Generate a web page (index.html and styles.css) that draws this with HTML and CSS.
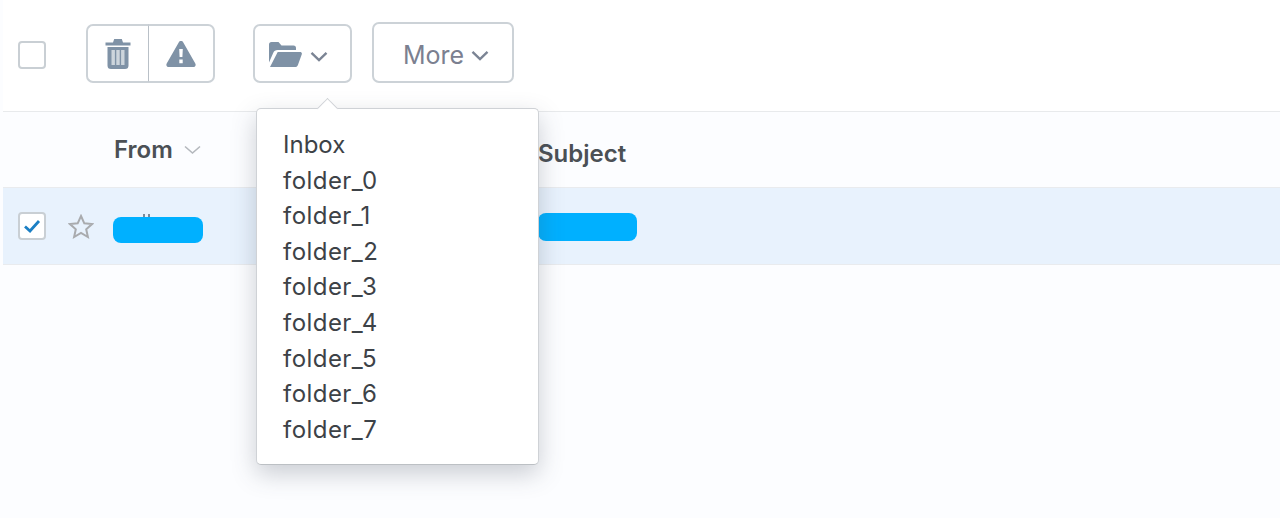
FILE: index.html
```html
<!DOCTYPE html>
<html lang="en">
<head>
  <meta charset="UTF-8" />
  <title>Inbox</title>
  <link rel="stylesheet" href="styles.css">
</head>
<body>
  <div class="toolbar">
    <span class="checkbox"></span>
    <div class="btn-group">
      <button class="btn btn-trash" aria-label="Delete">
        <svg width="26" height="31" viewBox="0 0 26 31"><path fill="#7f92a6" d="M.500 4.500h25v3H.500zM8 4.500l1.200-3.500h7.600L18 4.500zM2.500 9h21v18.500a3.500 3.500 0 0 1-3.500 3.500H6a3.500 3.500 0 0 1-3.500-3.500z"/><path fill="#cdd5dc" d="M6.500 12h3.400v15H6.500zM11.300 12h3.400v15h-3.400zM16.100 12h3.400v15h-3.400z"/></svg>
      </button>
      <button class="btn btn-warn" aria-label="Report">
        <svg width="30" height="26" viewBox="0 0 30 26"><path fill="#7f92a6" fill-rule="evenodd" d="M15 0c1 0 1.800.5 2.300 1.400l12 21c1 1.700-.2 3.600-2.200 3.600H2.900c-2 0-3.200-1.900-2.200-3.600l12-21C13.200.5 14 0 15 0zM13.200 8l.4 8h2.800l.4-8zM13.300 18.500v3.700h3.400v-3.700z"/></svg>
      </button>
    </div>
    <button class="btn btn-folder" aria-label="Move to folder">
      <svg width="33" height="25" viewBox="0 0 33 25"><path fill="#7f92a6" d="M0 2.500A2.500 2.500 0 0 1 2.500 0h7l3 3.500h12A2.500 2.500 0 0 1 27 6v2H8.500c-2 0-3.400 1-4.200 2.800L0 20.500z"/><path fill="#7f92a6" d="M8.700 10H31c1.400 0 2.200 1 1.800 2.300l-3.800 10.400c-.5 1.400-1.500 2.300-3 2.300H1z"/></svg>
      <svg class="chev" width="18" height="11" viewBox="0 0 18 11"><path fill="none" stroke="#7b8494" stroke-width="2.400" d="M1.500 1.800 9 9l7.500-7.200"/></svg>
    </button>
    <button class="btn btn-more">More
      <svg class="chev" width="18" height="11" viewBox="0 0 18 11"><path fill="none" stroke="#7b8494" stroke-width="2.400" d="M1.500 1.800 9 9l7.500-7.200"/></svg>
    </button>
  </div>

  <div class="mail-list">
    <div class="list-row list-head">
      <div class="col-from">From
        <svg width="17" height="10" viewBox="0 0 17 10"><path fill="none" stroke="#b4b8bd" stroke-width="1.600" d="M1 1.500 8.500 8 16 1.500"/></svg>
      </div>
      <div class="col-subject">Subject</div>
    </div>
    <div class="list-row list-selected">
      <span class="checkbox checked">
        <svg width="20" height="16" viewBox="0 0 20 16"><path fill="none" stroke="#1b7fc4" stroke-width="2.800" d="M3 8.500 8 13 17 3"/></svg>
      </span>
      <svg class="star" width="26" height="25" viewBox="0 0 26 25"><path fill="none" stroke="#a9abae" stroke-width="2" d="M13 2l3.300 7.300 7.700.8-5.800 5.200 1.700 7.700-6.900-4-6.900 4 1.700-7.700L2 10.100l7.700-.8z"/></svg>
      <div class="col-from"><span class="redact redact-from"></span></div>
      <div class="col-subject"><span class="redact redact-subject"></span></div>
    </div>
  </div>

  <div class="folder-menu">
    <ul>
      <li>Inbox</li>
      <li>folder_0</li>
      <li>folder_1</li>
      <li>folder_2</li>
      <li>folder_3</li>
      <li>folder_4</li>
      <li>folder_5</li>
      <li>folder_6</li>
      <li>folder_7</li>
    </ul>
  </div>
</body>
</html>
```

FILE: styles.css
```css
html, body {
  height: 100%;
}
body {
  margin: 0;
  overflow: hidden;
  background: #fcfdff;
  font-family: Inter, "Liberation Sans", sans-serif;
  color: #3d4247;
}
.toolbar {
  display: flex;
  align-items: flex-end;
  height: 83px;
  padding: 0 0 28px 15px;
  margin-left: 3px;
  background: #fff;
  border-bottom: 1px solid #e8eaec;
}
.checkbox {
  display: flex;
  align-items: center;
  justify-content: center;
  flex: none;
  width: 28px;
  height: 28px;
  box-sizing: border-box;
  background: #fff;
  border: 2px solid #c9cfd4;
  border-radius: 4px;
}
.toolbar > .checkbox {
  margin-bottom: 14px;
}
.btn {
  display: flex;
  align-items: center;
  justify-content: center;
  box-sizing: border-box;
  height: 59px;
  padding: 0;
  background: #fff;
  border: 2px solid #ccd2d7;
  border-radius: 7px;
  font: inherit;
  color: #7b8090;
}
.btn-group {
  display: flex;
  margin-left: 40px;
}
.btn-trash {
  width: 62px;
  border-right: 0;
  border-radius: 7px 0 0 7px;
}
.btn-warn {
  width: 67px;
  border-left: 1px solid #b9c0c7;
  border-radius: 0 7px 7px 0;
}
.btn-folder {
  width: 99px;
  margin-left: 38px;
  padding: 2px 9px 0 0;
  gap: 8px;
}
.btn-folder .chev {
  margin-top: 4px;
}
.btn-more {
  width: 142px;
  height: 61px;
  margin-left: 20px;
  padding: 4px 0 0 6px;
  gap: 7px;
  font-size: 25px;
}
.btn-more .chev {
  margin-top: 2px;
}
.list-row {
  display: flex;
  align-items: center;
  margin-left: 3px;
  padding-left: 15px;
  border-bottom: 1px solid #e9ebee;
}
.list-head {
  height: 75px;
  font-size: 24px;
  font-weight: 600;
  color: #4b5055;
}
.list-head .col-from {
  display: flex;
  align-items: center;
  gap: 11px;
  margin-left: 96px;
  width: 424px;
}
.list-head .col-subject {
  padding-top: 8px;
}
.list-selected {
  height: 76px;
  background: #e8f2fd;
}
.star {
  margin-left: 22px;
}
.list-selected .col-from {
  margin-left: 19px;
  width: 425px;
}
.redact {
  display: block;
  position: relative;
  background: #00b0ff;
  border-radius: 8px;
}
.redact-from {
  width: 90px;
  height: 26px;
  margin-top: 8px;
}
/* tiny bit of the name still showing above the blur */
.redact-from::before {
  content: "";
  position: absolute;
  left: 30px;
  top: -3px;
  width: 2px;
  height: 3px;
  background: #7d8a99;
  box-shadow: 5px 0 #7d8a99;
}
.redact-subject {
  width: 99px;
  height: 28px;
  margin-top: 2px;
}
.folder-menu {
  position: absolute;
  left: 256px;
  top: 108px;
  width: 283px;
  height: 357px;
  box-sizing: border-box;
  padding: 18px 26px;
  background: #fff;
  border: 1px solid #cfd2d6;
  border-bottom-color: #bcc0c4;
  border-radius: 5px;
  box-shadow: 0 9px 24px rgba(60, 70, 85, 0.26);
  font-size: 24px;
  letter-spacing: 0.45px;
  color: #3d4247;
}
.folder-menu::before {
  content: "";
  position: absolute;
  left: 63px;
  top: -8px;
  width: 14px;
  height: 14px;
  background: #fff;
  border-top: 1px solid #cfd2d6;
  border-left: 1px solid #cfd2d6;
  transform: rotate(45deg);
}
.folder-menu ul {
  position: relative;
  list-style: none;
  margin: 0;
  padding: 0;
}
.folder-menu li {
  height: 35.600px;
  line-height: 35.600px;
}
.folder-menu li:first-child {
  letter-spacing: 0;
}
```
